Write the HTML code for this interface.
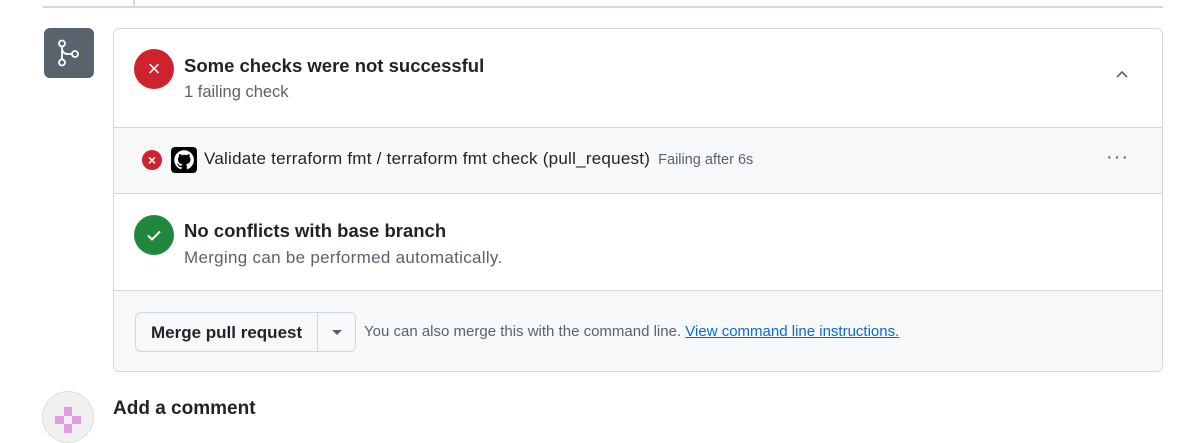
<!DOCTYPE html>
<html><head><style>
*{box-sizing:border-box;margin:0;padding:0}
body{width:1188px;height:420px;overflow:hidden;background:#fff;font-family:"Liberation Sans",sans-serif;color:#1f2328;position:relative}
.abs{position:absolute;white-space:nowrap}
</style></head><body>
<div class="abs" style="left:133px;top:0;width:2px;height:7px;background:#d1d9e0"></div>
<div class="abs" style="left:43px;top:6px;width:1120px;height:2px;background:#d1d9e0"></div>
<div class="abs" style="left:44px;top:28px;width:50px;height:50px;background:#59636e;border-radius:6px">
<svg width="50" height="50" viewBox="0 0 50 50"><g fill="none" stroke="#fff" stroke-width="1.8"><circle cx="18" cy="15.5" r="3"/><circle cx="18" cy="34.5" r="3"/><circle cx="31" cy="26" r="3"/><path d="M18 18.5v13M18 20q0 6 6 6h4"/></g></svg></div>
<div class="abs" style="left:113px;top:28px;width:1050px;height:344px;border:1px solid #d1d9e0;border-radius:6px;overflow:hidden">
 <div class="abs" style="left:0;top:0;width:1048px;height:99px;border-bottom:1px solid #d1d9e0">
  <div class="abs" style="left:20px;top:20px;width:40px;height:40px;border-radius:50%;background:#cf222e;color:#fff;text-align:center;line-height:40px;font-size:22px">×</div>
  <div class="abs" style="left:70px;top:26px;font-size:18.5px;font-weight:bold">Some checks were not successful</div>
  <div class="abs" style="left:70px;top:54px;font-size:16.5px;color:#59636e">1 failing check</div>
  <svg class="abs" style="left:1000px;top:38px" width="16" height="16" viewBox="0 0 16 16"><path d="M3 10l5-5 5 5" fill="none" stroke="#59636e" stroke-width="1.6"/></svg>
 </div>
 <div class="abs" style="left:0;top:99px;width:1048px;height:66px;background:#f6f8fa;border-bottom:1px solid #d1d9e0">
  <div class="abs" style="left:28px;top:22px;width:20px;height:20px;border-radius:50%;background:#cf222e;color:#fff;text-align:center;line-height:20px;font-size:14px;font-weight:bold">×</div>
  <div class="abs" style="left:57px;top:19px;width:26px;height:26px;border-radius:4px;background:#000"><svg width="26" height="26" viewBox="0 0 16 16"><path transform="translate(2 2) scale(.75)" fill="#fff" d="M8 0a8 8 0 0 0-2.5 15.6c.4 0 .5-.2.5-.4v-1.5C3.8 14.1 3.4 12.7 3.4 12.7c-.4-.9-.9-1.2-.9-1.2-.7-.5.1-.5.1-.5.8.1 1.2.8 1.2.8.7 1.300 1.9.9 2.4.7 0-.5.3-.9.5-1.1-1.8-.2-3.6-.9-3.6-4 0-.9.3-1.6.8-2.1-.1-.2-.4-1 .1-2.1 0 0 .7-.2 2.2.8a7.6 7.6 0 0 1 4 0c1.5-1 2.2-.8 2.200-.8.4 1.1.2 1.9.1 2.1.5.6.8 1.3.8 2.1 0 3.1-1.9 3.8-3.6 4 .3.3.6.8.6 1.5v2.2c0 .2.1.5.6.4A8 8 0 0 0 8 0z"/></svg></div>
  <div class="abs" style="left:90px;top:21px;font-size:17px;letter-spacing:0.25px">Validate terraform fmt / terraform fmt check (pull_request) <span style="font-size:14.5px;letter-spacing:0;color:#59636e;margin-left:3px">Failing after 6s</span></div>
  <div class="abs" style="left:992px;top:18px;font-size:20px;color:#59636e;letter-spacing:1px">···</div>
 </div>
 <div class="abs" style="left:0;top:165px;width:1048px;height:97px;border-bottom:1px solid #d1d9e0">
  <div class="abs" style="left:20px;top:21px;width:40px;height:40px;border-radius:50%;background:#1f883d"><svg width="40" height="40" viewBox="0 0 40 40"><path d="M14 20.5l4 4 8-8" fill="none" stroke="#fff" stroke-width="2"/></svg></div>
  <div class="abs" style="left:70px;top:26px;font-size:18.5px;font-weight:bold">No conflicts with base branch</div>
  <div class="abs" style="left:70px;top:54px;font-size:17px;letter-spacing:0.3px;color:#59636e">Merging can be performed automatically.</div>
 </div>
 <div class="abs" style="left:0;top:262px;width:1048px;height:82px;background:#f6f8fa">
  <div class="abs" style="left:21px;top:21px;width:221px;height:40px;border:1px solid #d1d9e0;border-radius:6px;background:#f6f8fa">
   <div class="abs" style="left:15px;top:10px;font-size:17px;font-weight:bold">Merge pull request</div>
   <div class="abs" style="left:181px;top:0;width:1px;height:38px;background:#d1d9e0"></div>
   <div class="abs" style="left:196px;top:17px;width:0;height:0;border-left:5px solid transparent;border-right:5px solid transparent;border-top:5px solid #59636e"></div>
  </div>
  <div class="abs" style="left:250px;top:32px;font-size:15px;color:#59636e">You can also merge this with the command line. <span style="color:#0969da;text-decoration:underline">View command line instructions.</span></div>
 </div>
</div>
<div class="abs" style="left:42px;top:391px;width:52px;height:52px;border-radius:50%;background:#f0f0f0;border:1px solid #ddd">
 <div class="abs" style="left:12px;top:24px;width:26px;height:8px;background:#e09de6"></div>
 <div class="abs" style="left:21px;top:15px;width:8px;height:26px;background:#e09de6"></div>
 <div class="abs" style="left:21px;top:24px;width:8px;height:8px;background:#f0f0f0"></div>
</div>
<div class="abs" style="left:113px;top:398px;font-size:19px;font-weight:bold">Add a comment</div>
</body></html>
